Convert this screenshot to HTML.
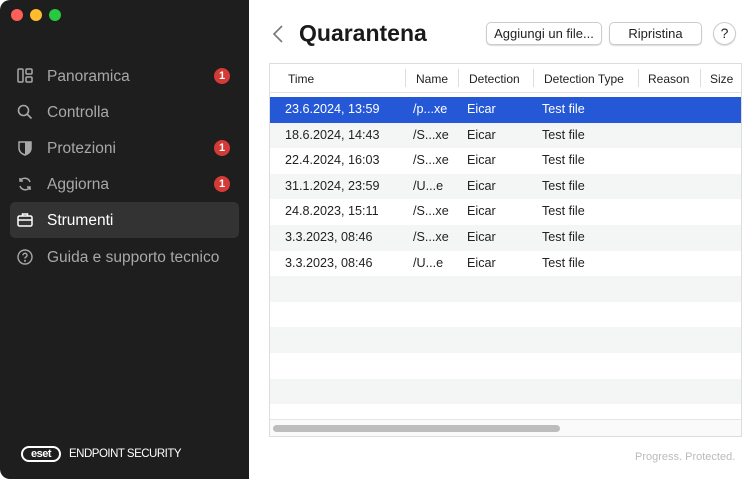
<html><head><style>
body{margin:0;width:756px;height:479px;overflow:hidden;font-family:"Liberation Sans",Arial,sans-serif;background:#fff;position:relative}
.side{position:absolute;left:0;top:0;width:249px;height:479px;background:#1e1e1e;border-radius:10px 0 0 10px}
.dot{position:absolute;top:9px;width:12px;height:12px;border-radius:50%}
.nav{position:absolute;left:10px;width:229px;height:36px;color:#a8a8a8;font-size:15.5px;line-height:37px}
.nav span.t{position:absolute;left:37px}
.nav svg{position:absolute;left:7px;top:10px}
.badge{position:absolute;left:204px;top:10px;width:16px;height:16px;border-radius:50%;background:#d33b36;color:#fff;font-size:11px;font-weight:bold;line-height:16px;text-align:center}
.sel{background:#333334;border-radius:5px;color:#fff}
.btn{position:absolute;top:22px;height:21px;border:1px solid #ccc;border-radius:5px;box-shadow:0 1px 1px rgba(0,0,0,.15);font-size:13px;line-height:21px;text-align:center;color:#222;background:#fff}
.tbl{position:absolute;left:269px;top:63px;width:471px;height:372px;border:1px solid #ddd;overflow:hidden;font-size:12px;color:#222}
.hdr{position:absolute;top:0;left:0;right:0;height:28px;border-bottom:1px solid #e2e2e2}
.hdr span{position:absolute;top:8px}
.sep{position:absolute;top:5px;width:1px;height:18px;background:#ddd}
.row{position:absolute;left:0;right:0;height:25.6px;font-size:12.6px;line-height:25.6px}
.row span{position:absolute}
</style></head><body>
<div class="side">
<div class="dot" style="left:11px;background:#fe5f57"></div>
<div class="dot" style="left:30px;background:#febc2e"></div>
<div class="dot" style="left:49px;background:#28c840"></div>
<div class="nav" style="top:58px"><svg width="16" height="16" fill="none" stroke="#a8a8a8" stroke-width="1.5"><rect x="1" y="1" width="5" height="13" rx="1"/><rect x="9" y="1" width="6" height="5" rx="1"/><rect x="9" y="9" width="6" height="5" rx="1"/></svg><span class="t">Panoramica</span><div class="badge">1</div></div>
<div class="nav" style="top:94px"><svg width="16" height="16" fill="none" stroke="#a8a8a8" stroke-width="1.6"><circle cx="6.5" cy="6.5" r="5"/><path d="M10 10l4.5 4.5"/></svg><span class="t">Controlla</span></div>
<div class="nav" style="top:130px"><svg width="16" height="16"><path d="M2 2h12v6c0 4-3 6-6 7-3-1-6-3-6-7z" fill="none" stroke="#a8a8a8" stroke-width="1.5"/><path d="M8 2h6v6c0 4-3 6-6 7z" fill="#a8a8a8"/></svg><span class="t">Protezioni</span><div class="badge">1</div></div>
<div class="nav" style="top:166px"><svg width="16" height="16" fill="none" stroke="#a8a8a8" stroke-width="1.5"><path d="M13 6A5.5 5.5 0 0 0 3 5M3 10a5.5 5.5 0 0 0 10 1"/><path d="M3 2v3h3M13 14v-3h-3"/></svg><span class="t">Aggiorna</span><div class="badge">1</div></div>
<div class="nav sel" style="top:202px"><svg width="16" height="16" fill="none" stroke="#fff" stroke-width="1.5"><rect x="1" y="4" width="14" height="10" rx="1.5"/><path d="M5.5 4V2h5v2M1 8h14"/></svg><span class="t">Strumenti</span></div>
<div class="nav" style="top:239px"><svg width="16" height="16" fill="none" stroke="#a8a8a8" stroke-width="1.4"><circle cx="8" cy="8" r="7"/><path d="M6 6.3a2 2 0 1 1 2.5 1.9c-.5.2-.5.6-.5 1.3"/><circle cx="8" cy="11.8" r=".4"/></svg><span class="t">Guida e supporto tecnico</span></div>
<div style="position:absolute;left:21px;top:446px;width:40px;height:16px;border:2px solid #fff;border-radius:9px;box-sizing:border-box;color:#fff;font-size:11px;font-weight:bold;line-height:12px;text-align:center;letter-spacing:-.5px">eset</div>
<div style="position:absolute;left:69px;top:448px;color:#fff;font-size:11.5px;letter-spacing:-.5px">ENDPOINT SECURITY</div>
</div>
<svg style="position:absolute;left:272px;top:25px" width="12" height="18" fill="none" stroke="#777" stroke-width="1.6"><path d="M10 1L2 9l8 8"/></svg>
<div style="position:absolute;left:299px;top:20px;font-size:23px;font-weight:bold;color:#1a1a1a">Quarantena</div>
<div class="btn" style="left:486px;width:114px">Aggiungi un file...</div>
<div class="btn" style="left:609px;width:91px">Ripristina</div>
<div class="btn" style="left:713px;width:21px;border-radius:50%;font-size:14px">?</div>
<div class="tbl">
<div class="hdr"><span style="left:18px">Time</span><div class="sep" style="left:135px"></div><span style="left:146px">Name</span><div class="sep" style="left:188px"></div><span style="left:199px">Detection</span><div class="sep" style="left:263px"></div><span style="left:274px">Detection Type</span><div class="sep" style="left:368px"></div><span style="left:378px">Reason</span><div class="sep" style="left:430px"></div><span style="left:440px">Size</span></div>
<div class="row" style="top:33px;background:#2558d6;color:#fff"><span style="left:15px">23.6.2024, 13:59</span><span style="left:143px">/p...xe</span><span style="left:197px">Eicar</span><span style="left:272px">Test file</span></div>
<div class="row" style="top:58.6px;background:#f4f5f5"><span style="left:15px">18.6.2024, 14:43</span><span style="left:143px">/S...xe</span><span style="left:197px">Eicar</span><span style="left:272px">Test file</span></div>
<div class="row" style="top:84.2px"><span style="left:15px">22.4.2024, 16:03</span><span style="left:143px">/S...xe</span><span style="left:197px">Eicar</span><span style="left:272px">Test file</span></div>
<div class="row" style="top:109.8px;background:#f4f5f5"><span style="left:15px">31.1.2024, 23:59</span><span style="left:143px">/U...e</span><span style="left:197px">Eicar</span><span style="left:272px">Test file</span></div>
<div class="row" style="top:135.4px"><span style="left:15px">24.8.2023, 15:11</span><span style="left:143px">/S...xe</span><span style="left:197px">Eicar</span><span style="left:272px">Test file</span></div>
<div class="row" style="top:161px;background:#f4f5f5"><span style="left:15px">3.3.2023, 08:46</span><span style="left:143px">/S...xe</span><span style="left:197px">Eicar</span><span style="left:272px">Test file</span></div>
<div class="row" style="top:186.6px"><span style="left:15px">3.3.2023, 08:46</span><span style="left:143px">/U...e</span><span style="left:197px">Eicar</span><span style="left:272px">Test file</span></div>
<div class="row" style="top:212.2px;background:#f4f5f5"></div>
<div class="row" style="top:263.4px;background:#f4f5f5"></div>
<div class="row" style="top:314.6px;background:#f4f5f5"></div>
<div style="position:absolute;left:0;right:0;top:355px;height:17px;background:#fafafa;border-top:1px solid #e5e5e5"></div>
<div style="position:absolute;left:3px;top:361px;width:287px;height:7px;border-radius:4px;background:#bdbdbd"></div>
</div>
<div style="position:absolute;left:635px;top:451px;font-size:11px;color:#bbb">Progress. Protected.</div>
</body></html>
